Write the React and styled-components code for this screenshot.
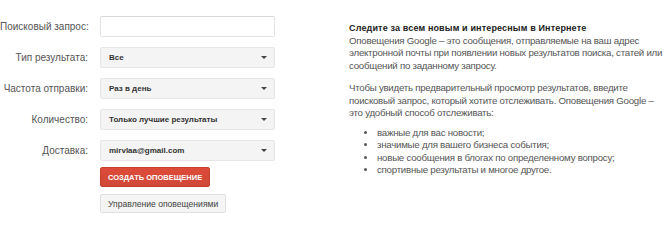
import styled, { createGlobalStyle } from "styled-components";

const GlobalStyle = createGlobalStyle`
  body {
    margin: 0;
    background: #fff;
    font-family: "Liberation Sans", Arial, sans-serif;
  }
`;

const Page = styled.div`
  display: flex;
  align-items: flex-start;
  width: 665px;
  height: 217px;
  overflow: hidden;
`;

const Form = styled.div`
  display: flex;
  flex-direction: column;
  gap: 10px;
  padding: 16px 0 0 0;
  width: 349px;
  flex-shrink: 0;
`;

const Row = styled.div`
  display: flex;
  align-items: center;
  height: 21px;
`;

const Label = styled.div`
  width: 88px;
  padding-right: 12px;
  text-align: right;
  font-size: 10px;
  color: #555;
  white-space: nowrap;
`;

const TextInput = styled.div`
  box-sizing: border-box;
  width: 175px;
  height: 21px;
  border: 1px solid #e3e3e3;
  border-top-color: #d9d9d9;
  border-radius: 2px;
  background: #fff;
`;

const Select = styled.div`
  box-sizing: border-box;
  width: 175px;
  height: 21px;
  display: flex;
  align-items: center;
  justify-content: space-between;
  padding: 0 7px 0 8px;
  border: 1px solid #e6e6e6;
  border-radius: 2px;
  background: #f4f4f4;
  font-size: 8px;
  font-weight: bold;
  color: #333;
`;

const Caret = styled.span`
  width: 0;
  height: 0;
  border-left: 3px solid transparent;
  border-right: 3px solid transparent;
  border-top: 3px solid #444;
`;

const Actions = styled.div`
  display: flex;
  flex-direction: column;
  align-items: flex-start;
  gap: 7px;
  margin-left: 100px;
  margin-top: -4px;
`;

const Button = styled.div`
  box-sizing: border-box;
  height: ${(p) => (p.primary ? "20px" : "19px")};
  display: flex;
  align-items: center;
  padding: 0 7px;
  border-radius: 2px;
  white-space: nowrap;
  ${(p) =>
    p.primary
      ? `
    background: linear-gradient(#dd4b39, #d14836);
    border: 1px solid #c6402f;
    color: #fff;
    font-weight: bold;
    font-size: 7.5px;
    text-transform: uppercase;
  `
      : `
    background: #f5f5f5;
    border: 1px solid #e0e0e0;
    color: #444;
    font-size: 8.6px;
  `}
`;

const Info = styled.div`
  padding-top: 22px;
  width: 315px;
  flex-shrink: 0;
  font-size: 9.7px;
  letter-spacing: -0.25px;
  color: #555;
  line-height: 12.5px;
`;

const Title = styled.div`
  font-weight: bold;
  color: #222;
  font-size: 9px;
  letter-spacing: 0.15px;
`;

const Para = styled.p`
  margin: 0 0 ${(p) => p.gap || 10}px 0;
`;

const List = styled.ul`
  margin: 0;
  padding-left: 28px;
  list-style: disc;
`;

const fields = [
  { label: "Тип результата:", value: "Все" },
  { label: "Частота отправки:", value: "Раз в день" },
  { label: "Количество:", value: "Только лучшие результаты" },
  { label: "Доставка:", value: "mirvlaa@gmail.com" },
];

const items = [
  "важные для вас новости;",
  "значимые для вашего бизнеса события;",
  "новые сообщения в блогах по определенному вопросу;",
  "спортивные результаты и многое другое.",
];

const App = () => {
  return (
    <Page>
      <GlobalStyle />
      <Form>
        <Row>
          <Label>Поисковый запрос:</Label>
          <TextInput />
        </Row>
        {fields.map((f) => (
          <Row key={f.label}>
            <Label>{f.label}</Label>
            <Select>
              <span>{f.value}</span>
              <Caret />
            </Select>
          </Row>
        ))}
        <Actions>
          <Button primary>Создать оповещение</Button>
          <Button>Управление оповещениями</Button>
        </Actions>
      </Form>
      <Info>
        <Title>Следите за всем новым и интересным в Интернете</Title>
        <Para>
          Оповещения Google – это сообщения, отправляемые на ваш адрес
          электронной почты при появлении новых результатов поиска, статей или
          сообщений по заданному запросу.
        </Para>
        <Para gap={7}>
          Чтобы увидеть предварительный просмотр результатов, введите
          поисковый запрос, который хотите отслеживать. Оповещения Google –
          это удобный способ отслеживать:
        </Para>
        <List>
          {items.map((i) => (
            <li key={i}>{i}</li>
          ))}
        </List>
      </Info>
    </Page>
  );
};

export default App;
